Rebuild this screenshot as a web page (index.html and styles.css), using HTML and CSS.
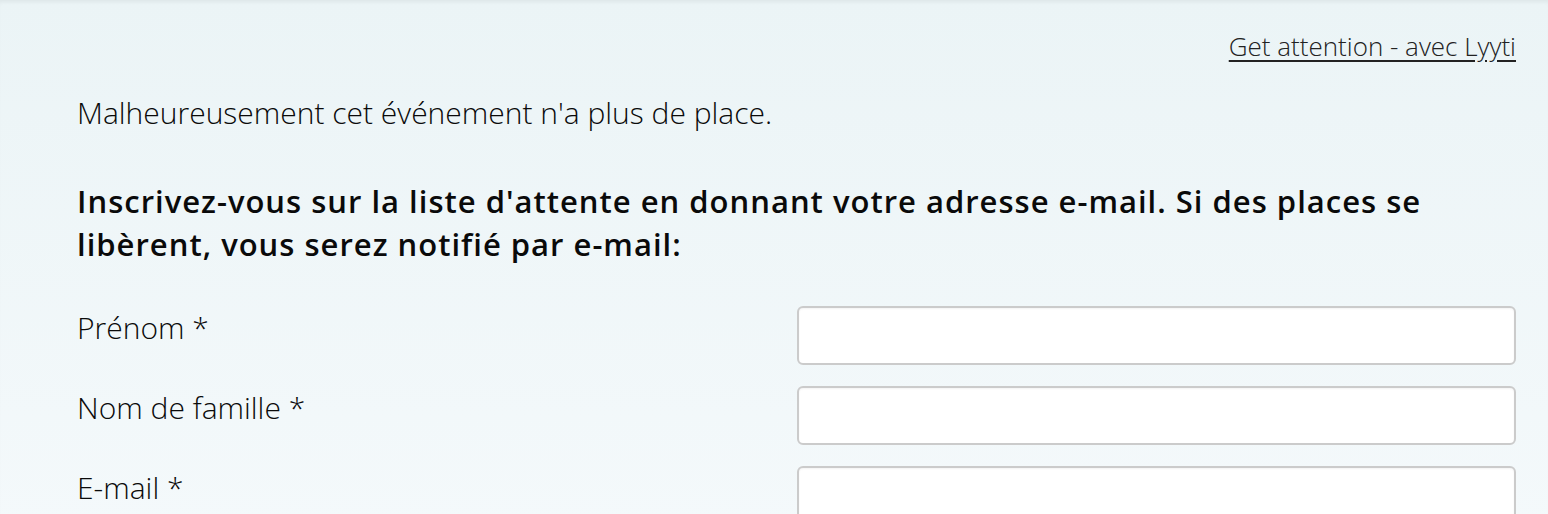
FILE: index.html
```html
<!DOCTYPE html>
<html lang="fr">
<head>
<meta charset="utf-8">
<title>Liste d'attente</title>
<link rel="stylesheet" href="styles.css">
</head>
<body>
<div class="page">
  <div class="topbar">
    <a class="brand-link" href="#">Get attention - avec Lyyti</a>
  </div>
  <p class="notice">Malheureusement cet événement n'a plus de place.</p>
  <p class="intro">Inscrivez-vous sur la liste d'attente en donnant votre adresse e-mail. Si des places se libèrent, vous serez notifié par e-mail:</p>
  <form class="form">
    <div class="row">
      <label class="label" for="fn">Prénom *</label>
      <input class="field" id="fn" type="text">
    </div>
    <div class="row">
      <label class="label" for="ln">Nom de famille *</label>
      <input class="field" id="ln" type="text">
    </div>
    <div class="row">
      <label class="label" for="em">E-mail *</label>
      <input class="field" id="em" type="email">
    </div>
  </form>
</div>
</body>
</html>
```

FILE: styles.css
```css
html, body {
  margin: 0;
  padding: 0;
}
body {
  font-family: "Open Sans", "Liberation Sans", sans-serif;
  color: #0a0a0a;
  background: linear-gradient(to bottom, #ebf4f6 0%, #f4f9fb 100%);
  min-height: 514px;
  box-shadow: inset 0 4px 4px -2px rgba(0, 0, 0, 0.06);
}
.page {
  padding: 26px 32px 0 77px;
}
.topbar {
  display: flex;
  justify-content: flex-end;
  height: 40px;
}
.brand-link {
  font-size: 26px;
  font-weight: 300;
  color: #222;
  text-decoration: underline;
  text-underline-offset: 4px;
  line-height: 40px;
}
.notice {
  margin: 27px 0 0;
  font-size: 30px;
  font-weight: 300;
  line-height: 40px;
}
.intro {
  margin: 47px 0 0;
  font-size: 31px;
  font-weight: 600;
  letter-spacing: 1px;
  line-height: 43px;
}
.form {
  margin-top: 40px;
  display: flex;
  flex-direction: column;
  gap: 21px;
}
.row {
  display: grid;
  grid-template-columns: 1fr 1fr;
  align-items: start;
}
.label {
  font-size: 30px;
  font-weight: 300;
  line-height: 44px;
}
.field {
  box-sizing: border-box;
  width: 100%;
  height: 59px;
  border: 2px solid #cbcbcb;
  border-radius: 6px;
  background: #fff;
  box-shadow: inset 0 1px 2px rgba(0, 0, 0, 0.05);
  margin: 0;
}
```
